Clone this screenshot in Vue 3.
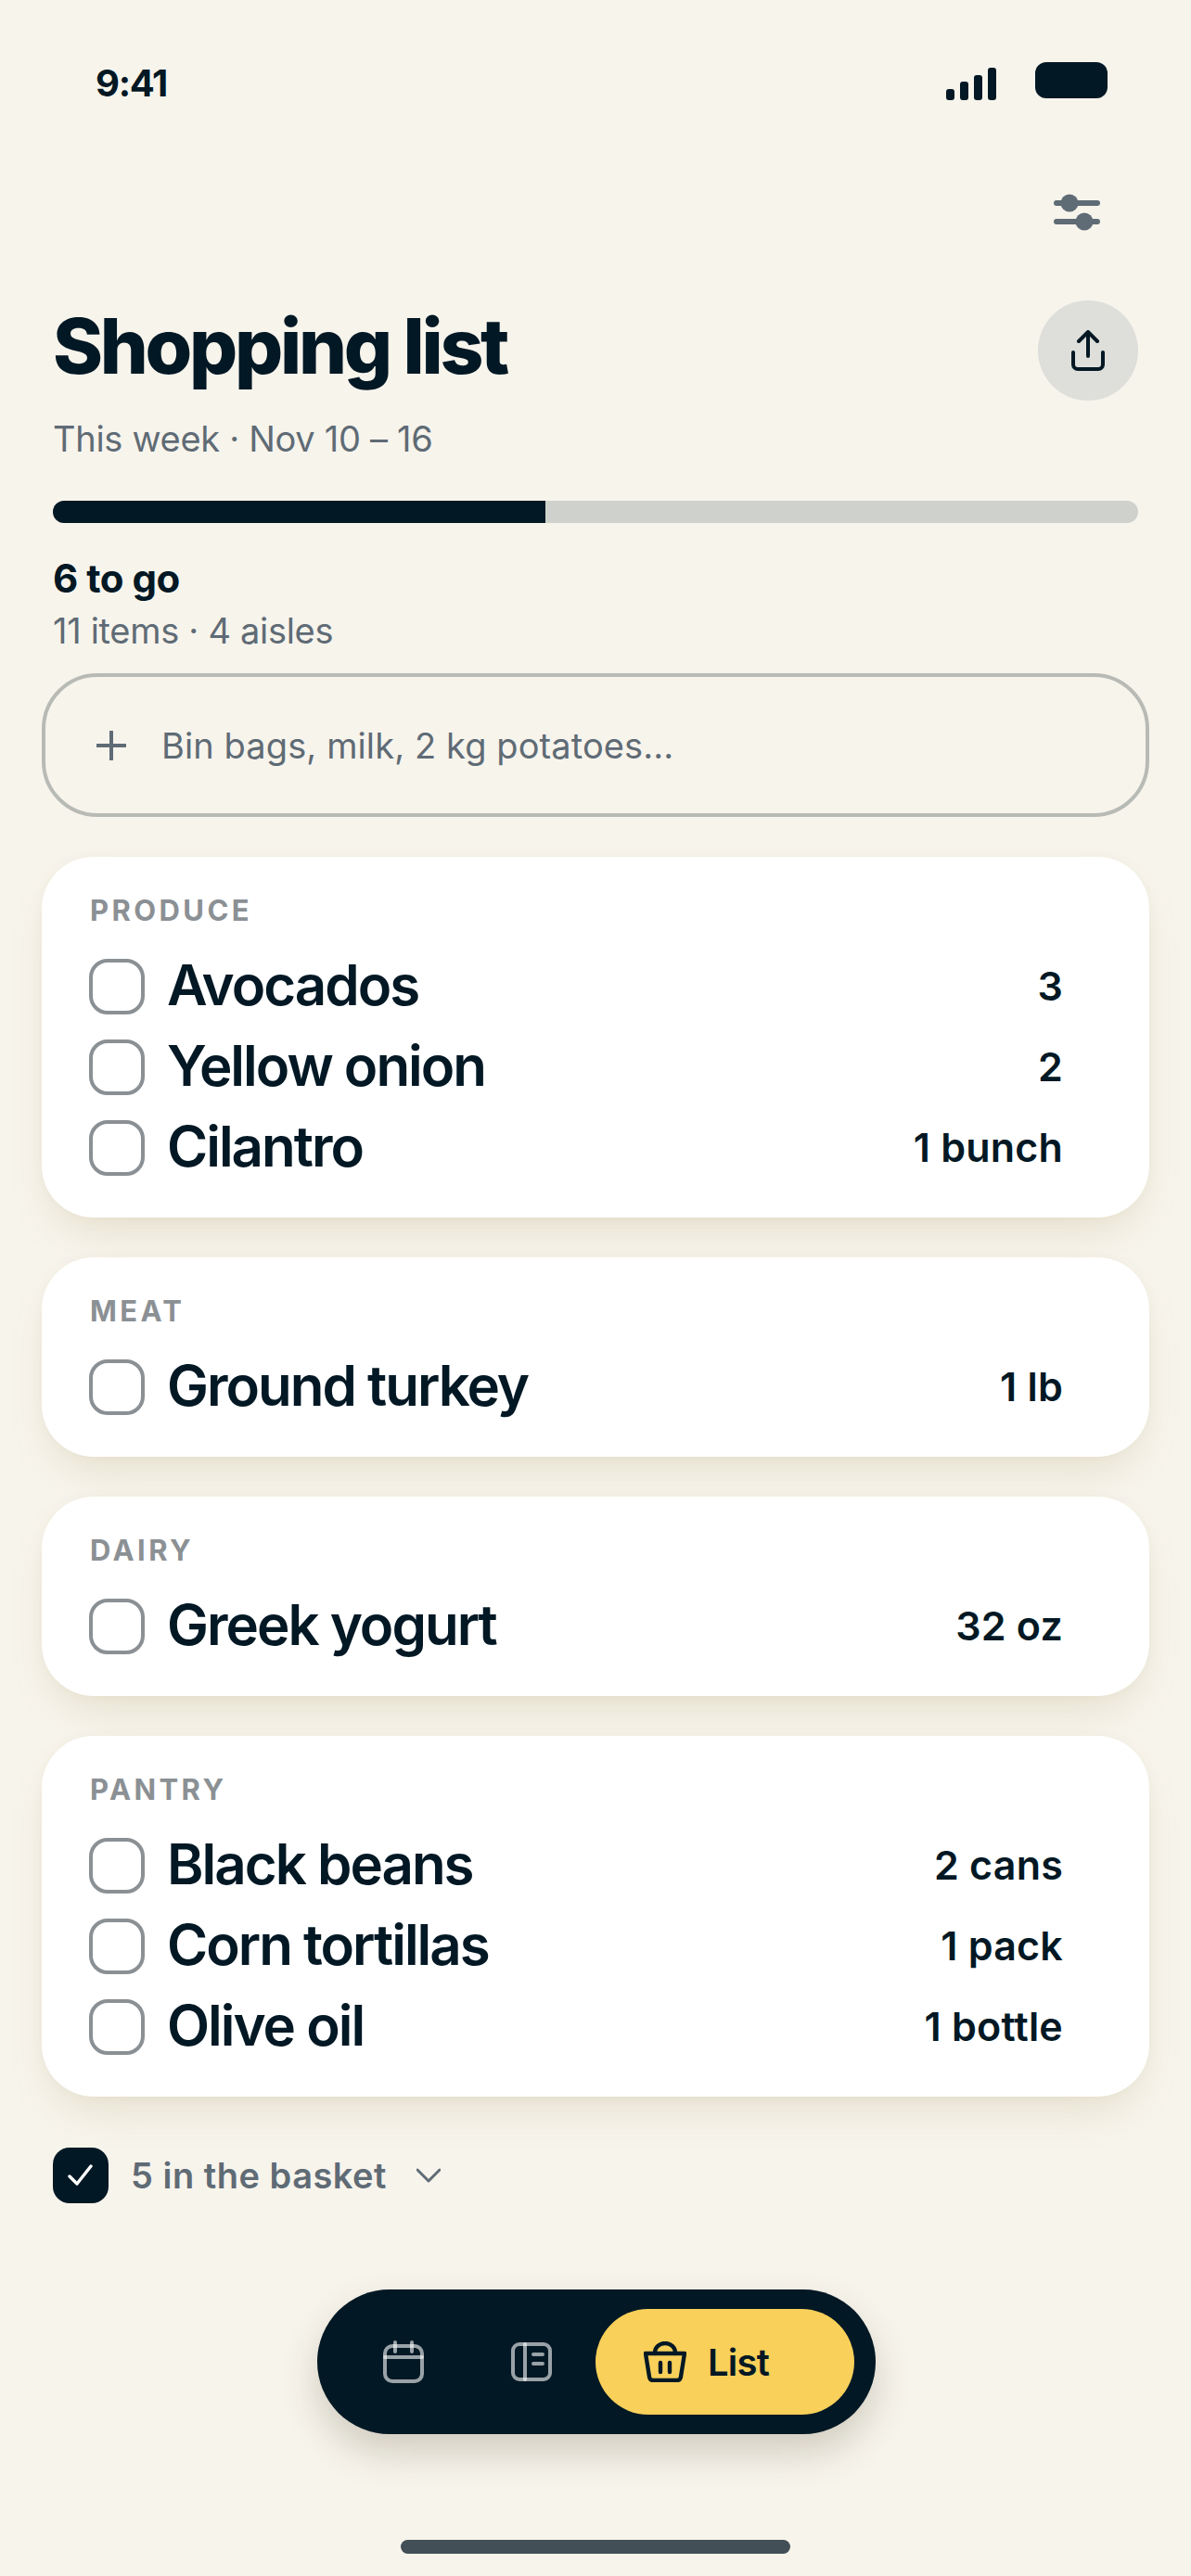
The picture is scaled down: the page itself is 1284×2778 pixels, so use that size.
<script setup>
const cards = [
  { name: 'PRODUCE', items: [['Avocados', '3'], ['Yellow onion', '2'], ['Cilantro', '1 bunch']] },
  { name: 'MEAT', items: [['Ground turkey', '1 lb']] },
  { name: 'DAIRY', items: [['Greek yogurt', '32 oz']] },
  { name: 'PANTRY', items: [['Black beans', '2 cans'], ['Corn tortillas', '1 pack'], ['Olive oil', '1 bottle']] },
]
</script>

<template>
  <div class="screen">
    <div class="status">
      <span class="time">9:41</span>
      <div class="status-right">
        <svg class="signal" width="54" height="36" viewBox="0 0 54 36"><rect x="0" y="23" width="9" height="12" rx="3"/><rect x="15" y="15" width="9" height="20" rx="3"/><rect x="30" y="8" width="9" height="27" rx="3"/><rect x="45" y="0" width="9" height="35" rx="3"/></svg>
        <div class="battery"></div>
      </div>
    </div>
    <div class="filter-row">
      <svg width="50" height="40" viewBox="0 0 50 40"><path d="M3 10H47M3 30H47" stroke="#5f6b75" stroke-width="6" stroke-linecap="round"/><circle cx="17" cy="10" r="9.5" fill="#5f6b75"/><circle cx="33" cy="30" r="9.5" fill="#5f6b75"/></svg>
    </div>
    <div class="head">
      <div>
        <h1>Shopping list</h1>
        <p class="week">This week · Nov 10 – 16</p>
      </div>
      <div class="share">
        <svg width="36" height="44" viewBox="0 0 36 44" fill="none" stroke="#021824" stroke-width="4" stroke-linecap="round" stroke-linejoin="round"><path d="M18 28V3M8 12l10-10 10 10"/><path d="M2 24v13a5 5 0 0 0 5 5h22a5 5 0 0 0 5-5V24"/></svg>
      </div>
    </div>
    <div class="track"><div class="fill"></div></div>
    <p class="togo">6 to go</p>
    <p class="count">11 items · 4 aisles</p>
    <div class="add">
      <svg width="32" height="32" viewBox="0 0 32 32"><path d="M16 1V31M1 16H31" stroke="#5f6b75" stroke-width="4" stroke-linecap="round"/></svg>
      <span>Bin bags, milk, 2 kg potatoes...</span>
    </div>
    <section v-for="c in cards" :key="c.name" class="card">
      <div class="aisle">{{ c.name }}</div>
      <div v-for="i in c.items" :key="i[0]" class="row">
        <span class="box"></span>
        <span class="name">{{ i[0] }}</span>
        <span class="qty">{{ i[1] }}</span>
      </div>
    </section>
    <div class="basket">
      <span class="checked">
        <svg width="28" height="24" viewBox="0 0 28 24" fill="none" stroke="#fff" stroke-width="3.4" stroke-linecap="round" stroke-linejoin="round"><path d="M2 13l8 8L25 2"/></svg>
      </span>
      <span class="basket-text">5 in the basket</span>
      <svg width="26" height="16" viewBox="0 0 26 16" fill="none" stroke="#5f6b75" stroke-width="3" stroke-linecap="round" stroke-linejoin="round"><path d="M1 2l12 12L25 2"/></svg>
    </div>
    <nav class="nav">
      <span class="tab">
        <svg width="44" height="46" viewBox="0 0 44 46" fill="none" stroke="#fff" stroke-opacity=".6" stroke-width="4" stroke-linecap="round"><rect x="2" y="6" width="40" height="38" rx="8"/><path d="M2 18H42M13 2v10M31 2v10"/></svg>
      </span>
      <span class="tab">
        <svg width="44" height="42" viewBox="0 0 44 42" fill="none" stroke="#fff" stroke-opacity=".6" stroke-width="4" stroke-linecap="round"><rect x="2" y="2" width="40" height="38" rx="7"/><path d="M15 2V40M24 13H34M24 23H34"/></svg>
      </span>
      <span class="active">
        <svg width="46" height="44" viewBox="0 0 46 44" fill="none" stroke="#021824" stroke-width="4.4" stroke-linecap="round" stroke-linejoin="round"><path d="M2 13H44L40 38a4 4 0 0 1-4 4H10a4 4 0 0 1-4-4Z"/><path d="M12 13V12a11 10 0 0 1 22 0v1M18 23v10M28 23v10"/></svg>
        <span>List</span>
      </span>
    </nav>
    <div class="home"></div>
  </div>
</template>

<style>
html, body { margin: 0; background: #f7f4ec; }
</style>

<style scoped>
.screen { box-sizing: border-box; width: 1284px; height: 2778px; padding: 0 45px; background: #f7f4ec; color: #021824; font-family: Inter, "Liberation Sans", sans-serif; overflow: hidden; }
p, h1 { margin: 0; }
.status { display: flex; justify-content: space-between; height: 110px; padding: 66px 45px 0 58px; box-sizing: border-box; }
.time { font-size: 40px; font-weight: 700; line-height: 48px; letter-spacing: -1.3px; }
.status-right { display: flex; gap: 42px; align-items: flex-start; }
.signal { fill: #021824; margin-top: 7px; }
.battery { width: 78px; height: 39px; background: #021824; border-radius: 12px; margin-top: 1px; }
.filter-row { display: flex; justify-content: flex-end; padding: 99px 53px 0 0; height: 40px; }
.head { display: flex; justify-content: space-between; padding: 75px 12px 0 12px; height: 150px; }
h1 { font-size: 82px; line-height: 100px; font-weight: 800; letter-spacing: -3.3px; }
.week { font-size: 38px; line-height: 44px; color: #5f6b75; margin-top: 27px; letter-spacing: -.3px; }
.share { width: 108px; height: 108px; border-radius: 50%; background: #dededa; display: flex; align-items: center; justify-content: center; }
.track { margin: 66px 12px 0; height: 24px; border-radius: 12px; background: #cfd2cc; overflow: hidden; }
.fill { width: 531px; height: 100%; background: #021824; }
.togo { font-size: 42px; line-height: 48px; font-weight: 700; margin: 36px 12px 0; letter-spacing: -.5px; }
.count { font-size: 38px; line-height: 44px; color: #5f6b75; margin: 10px 12px 0; letter-spacing: -.3px; }
.add { box-sizing: border-box; height: 155px; margin-top: 24px; border: 4px solid #b8bbb5; border-radius: 60px; display: flex; align-items: center; padding-left: 55px; gap: 38px; font-size: 38px; color: #5f6b75; letter-spacing: .1px; }
.card { background: #fff; border-radius: 56px; padding: 40px 52px 32px; margin-top: 43px; box-shadow: 0 24px 48px -16px rgba(150, 130, 70, .22), 0 0 12px rgba(150, 130, 70, .05); }
.aisle { font-size: 31px; line-height: 36px; font-weight: 700; letter-spacing: 3.4px; color: #8b9094; margin-bottom: 20px; }
.row { display: flex; align-items: center; height: 87px; }
.box { box-sizing: border-box; width: 60px; height: 60px; border: 4.5px solid #8b9094; border-radius: 20px; margin: 0 24px 0 -1px; }
.name { flex: 1; font-size: 60px; font-weight: 600; letter-spacing: -2px; margin-bottom: 3px; }
.qty { font-size: 43px; font-weight: 600; padding-right: 41px; letter-spacing: .2px; margin-bottom: 1px; }
.basket { display: flex; align-items: center; margin: 55px 0 0 12px; height: 60px; }
.checked { width: 60px; height: 60px; background: #021824; border-radius: 18px; display: flex; align-items: center; justify-content: center; margin-right: 24px; }
.basket-text { font-size: 38px; font-weight: 600; color: #5f6b75; margin-right: 32px; letter-spacing: .5px; }
.nav { box-sizing: border-box; width: 602px; height: 156px; margin: 93px 0 0 297px; padding: 21px 23px 21px 0; border-radius: 78px; background: #021824; display: flex; align-items: center; box-shadow: 0 20px 40px rgba(60, 50, 20, .2); }
.tab { width: 138px; display: flex; justify-content: center; }
.tab:first-child { margin-left: 24px; }
.active { flex: 1; height: 114px; background: #f8d05a; border-radius: 57px; display: flex; align-items: center; padding-left: 52px; gap: 23px; font-size: 40px; font-weight: 600; letter-spacing: -.8px; }
.home { width: 420px; height: 15px; border-radius: 8px; background: #434f57; margin: 114px 0 0 387px; }
</style>
